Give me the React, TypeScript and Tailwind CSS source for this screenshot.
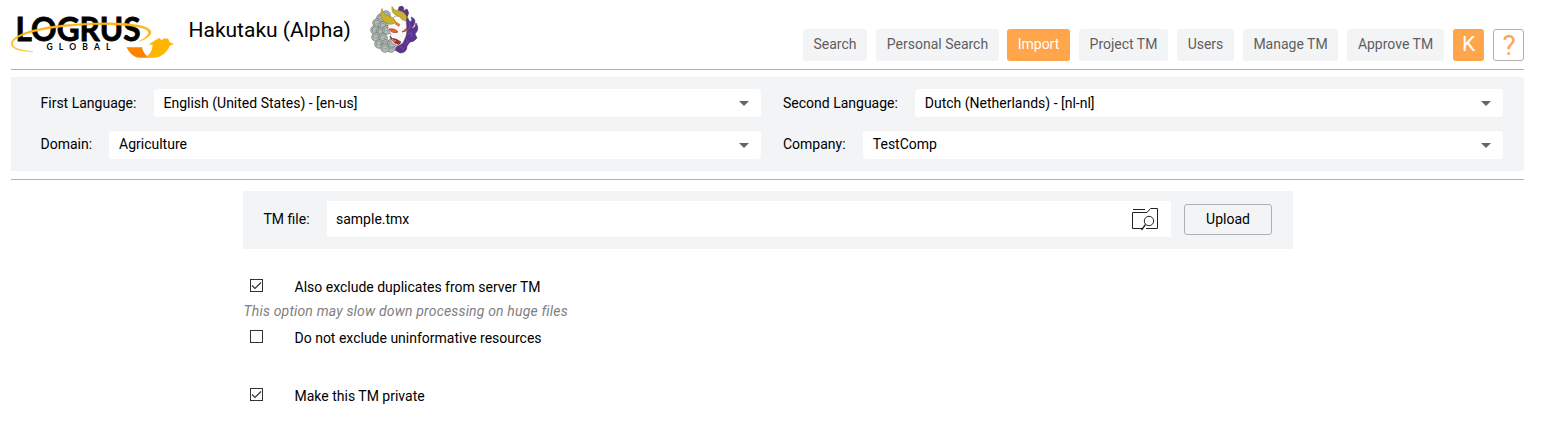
import React from "react";

function Logo() {
  return (
    <svg width="166" height="50" viewBox="10 12 166 50" className="block shrink-0 overflow-visible" role="img" aria-label="Logrus Global">
      <text x="15.500" y="40.500" fontSize="32.500" fontWeight="700" fontFamily="Lato, sans-serif" textLength="125" lengthAdjust="spacingAndGlyphs" fill="#000" stroke="#000" strokeWidth=".8">LOGRUS</text>
      <path d="M33 51.5C19 51.5 10.500 48 11.300 43.500C13 32 47 25 85 23.300C119 21.500 150 24 151 32C151 36 146 39 139 41.500C145 38 149 35 148.500 32C147 26 119 24 85 25C48 27 14 34 12.500 43.500C12.300 48 20 50.500 33 51.500Z" fill="#fdb515" stroke="#fdb515" strokeWidth=".4" />
      <text x="46.500" y="50" fontSize="8.500" fontWeight="700" fontFamily="Lato, sans-serif" textLength="64" lengthAdjust="spacing" fill="#000">GLOBAL</text>
      <path d="M126.500 47.300H142C143 52 146 57 151 57.800H140C133 57.500 129 52 126.500 47.300Z" fill="#ff8200" />
      <path d="M148.500 44.500L159 38L162 40.200L163.500 38.500H168L169.500 42L174 44.200L170 45.500C167 52 162 57.800 153 57.800H144C149 56 152.500 51 152.500 44.800Z" fill="#ffb500" />
    </svg>
  );
}

function Mascot() {
  const curls = [
    [16, 10], [11, 13], [7, 18], [13, 21], [5, 25], [11, 27], [17, 25], [6, 32], [13, 33], [9, 39], [16, 39], [21, 43], [15, 43], [22, 38],
  ];
  return (
    <svg width="50" height="50" viewBox="0 0 50 50" className="block shrink-0" role="img" aria-label="Hakutaku">
      <path d="M32 13L32 8L28 6L29 2L32 1L34 3L33 6L37 4Q40 8 37 12L40 17Q43 16 41 12Q47 14 44 20L41 24L45 22L46 18Q50 24 45 29L47 33Q44 37 40 37L37 41Q37 48 30 48L25 45L28 39L33 35L34 24Z" fill="#5b3292" stroke="#40305a" strokeWidth=".6" />
      <path d="M39 18Q42 22 37 26M38 29Q43 26 41 32M36 38Q38 38 38 35M30 42Q34 42 32 45" fill="none" stroke="#8e69b8" strokeWidth=".5" />
      {curls.map(([x, y]) => (
        <g key={`${x}-${y}`}>
          <circle cx={x} cy={y} r="4.300" fill="#b4beb7" stroke="#68706a" strokeWidth=".7" />
          <path d={`M${x - 2} ${y + 2}q-2-4 1.500-4.500q4 0 2.500 3q-1.500 1.500-2.500-.5`} fill="none" stroke="#747d76" strokeWidth=".6" />
        </g>
      ))}
      <path d="M18 18L25 11H33L36 15L37 25L36 31L33 38L28 41L22 38L20 33L21 29L18 24Z" fill="#fbf9f8" stroke="#625a60" strokeWidth=".5" />
      <path d="M12 3.500Q13 10 18 10.500Q24 12 26 17Q22 21 16 18Q8 13 12 3.500ZM22 1.500Q24 6 29 5.500Q36 7 37 13Q36 17 32 14.500Q30 11 26 10Q21 8 22 1.500Z" fill="#cbb22e" stroke="#80701f" strokeWidth=".5" />
      <path d="M26 17L30 19.500L29 21.500L25 19Z" fill="#e97932" stroke="#b45838" strokeWidth=".4" />
      <path d="M19 24Q25 23 28 27Q22 29 19 24ZM32 27L37 23L36 26Z" fill="#ed6b2d" stroke="#982f2c" strokeWidth=".7" />
      <path d="M20 31Q22 34.500 26 34L31 37L29 39.500Q22 38 20 31Z" fill="#b5262d" stroke="#55272e" strokeWidth=".6" />
      <path d="M22 34L24 36.500L26 35M31 31L33 30" fill="none" stroke="#ddd" strokeWidth=".7" />
    </svg>
  );
}

function NavButton({ label, width, active = false }: { label: string; width: string; active?: boolean }) {
  return (
    <button className={`${width} h-8 rounded-[3px] pb-0.5 ${active ? "bg-[#ffa54c] text-white" : "bg-[#f3f4f6] text-[#5e5e5e]"}`}>
      {label}
    </button>
  );
}

function Field({ label, value, labelWidth, raised = false }: { label: string; value: string; labelWidth: string; raised?: boolean }) {
  return (
    <div className="flex h-7 items-center">
      <span className={`${labelWidth} shrink-0 ${raised ? "pb-0.5" : ""}`}>{label}</span>
      <div className="flex h-7 flex-1 items-center justify-between rounded-[3px] bg-white pl-2.5 pr-3">
        <span className={raised ? "pb-0.5" : ""}>{value}</span>
        <svg width="10" height="5" viewBox="0 0 10 5" className="mt-px"><path d="M0 0H10L5 5Z" fill="#666" /></svg>
      </div>
    </div>
  );
}

function Option({ label, checked = false }: { label: string; checked?: boolean }) {
  return (
    <label className="flex h-5 items-center pl-[7px]">
      <svg width="13" height="13" viewBox="0 0 13 13" className="mr-[31.500px] -mt-[3px] shrink-0">
        <rect x=".5" y=".5" width="12" height="12" fill="white" stroke="#333" />
        {checked && <path d="M2 6.500L5 9.500L11 3.500" fill="none" stroke="#333" strokeWidth="1.200" />}
      </svg>
      {label}
    </label>
  );
}

export default function App() {
  return (
    <div className="h-[430px] w-[1554px] overflow-hidden bg-white pl-[11px] pr-[30px] font-['Roboto',sans-serif] text-[14px] leading-5 text-black">
      <header className="flex h-[70px] justify-between border-b border-[#b0b0b0]">
        <div className="flex">
          <div className="-ml-px pt-3"><Logo /></div>
          <h1 className="ml-[12.500px] w-[181.500px] pt-[16px] text-[21px] leading-7">Hakutaku (Alpha)</h1>
          <div className="pt-[5px]"><Mascot /></div>
        </div>
        <nav className="flex gap-[9px] pt-[29px]">
          <NavButton label="Search" width="w-16" />
          <NavButton label="Personal Search" width="w-[123px]" />
          <div className="-ml-px"><NavButton label="Import" width="w-[63px]" active /></div>
          <NavButton label="Project TM" width="w-[89px]" />
          <NavButton label="Users" width="w-[57px]" />
          <NavButton label="Manage TM" width="w-[95px]" />
          <NavButton label="Approve TM" width="w-[97px]" />
          <button className="h-8 w-[31px] rounded-[3px] bg-[#ffa54c] pb-0.5 text-[21px] text-white">K</button>
          <button className="h-8 w-[31px] rounded-[3px] border border-[#b0b0b0] bg-white pl-px pt-px text-[28px] leading-[30px] text-[#ffa54c]">?</button>
        </nav>
      </header>

      <section className="mt-[7px] grid h-[94px] grid-cols-[720px_720px] content-start gap-x-[22.500px] gap-y-3.5 bg-[#f3f4f6] pl-[29.500px] pt-3">
        <Field label="First Language:" value="English (United States) - [en-us]" labelWidth="w-[113px]" />
        <Field label="Second Language:" value="Dutch (Netherlands) - [nl-nl]" labelWidth="w-[131.800px]" />
        <Field label="Domain:" value="Agriculture" labelWidth="w-[68.500px]" raised />
        <Field label="Company:" value="TestComp" labelWidth="w-[79.800px]" raised />
      </section>
      <div className="mt-2 h-px bg-[#b0b0b0]" />

      <main className="ml-[232px] mt-[11px] w-[1050px]">
        <section className="flex h-[58px] items-start bg-[#f3f4f6] pl-[20.500px] pt-2.5">
          <span className="mt-2 w-[63.500px]">TM file:</span>
          <div className="flex h-9 w-[844px] items-center justify-between bg-white pl-[9px] pr-3">
            <span>sample.tmx</span>
            <svg width="27" height="24" viewBox="0 0 27 24" fill="none" stroke="#222" strokeWidth="1">
              <path d="M1 2.500H13M.5 5.500H15L18.500 1.500H25.500V21.500H14M10 21.500H.5V5.500" />
              <circle cx="17" cy="14" r="4.700" />
              <path d="M13.500 17.500L9.500 23" strokeWidth="1.300" />
            </svg>
          </div>
          <button className="ml-[13px] mt-[3px] h-[31px] w-[88px] rounded-[3px] border border-[#b0b0b0] bg-[#f3f4f6] pb-0.5">Upload</button>
        </section>
        <div className="mt-7">
          <Option label="Also exclude duplicates from server TM" checked />
          <p className="mt-1 h-5 pl-[0.500px] italic tracking-[0.168px] text-[#808080]">This option may slow down processing on huge files</p>
          <div className="mt-[7px]"><Option label="Do not exclude uninformative resources" /></div>
          <div className="mt-[38px]"><Option label="Make this TM private" checked /></div>
        </div>
      </main>
    </div>
  );
}
